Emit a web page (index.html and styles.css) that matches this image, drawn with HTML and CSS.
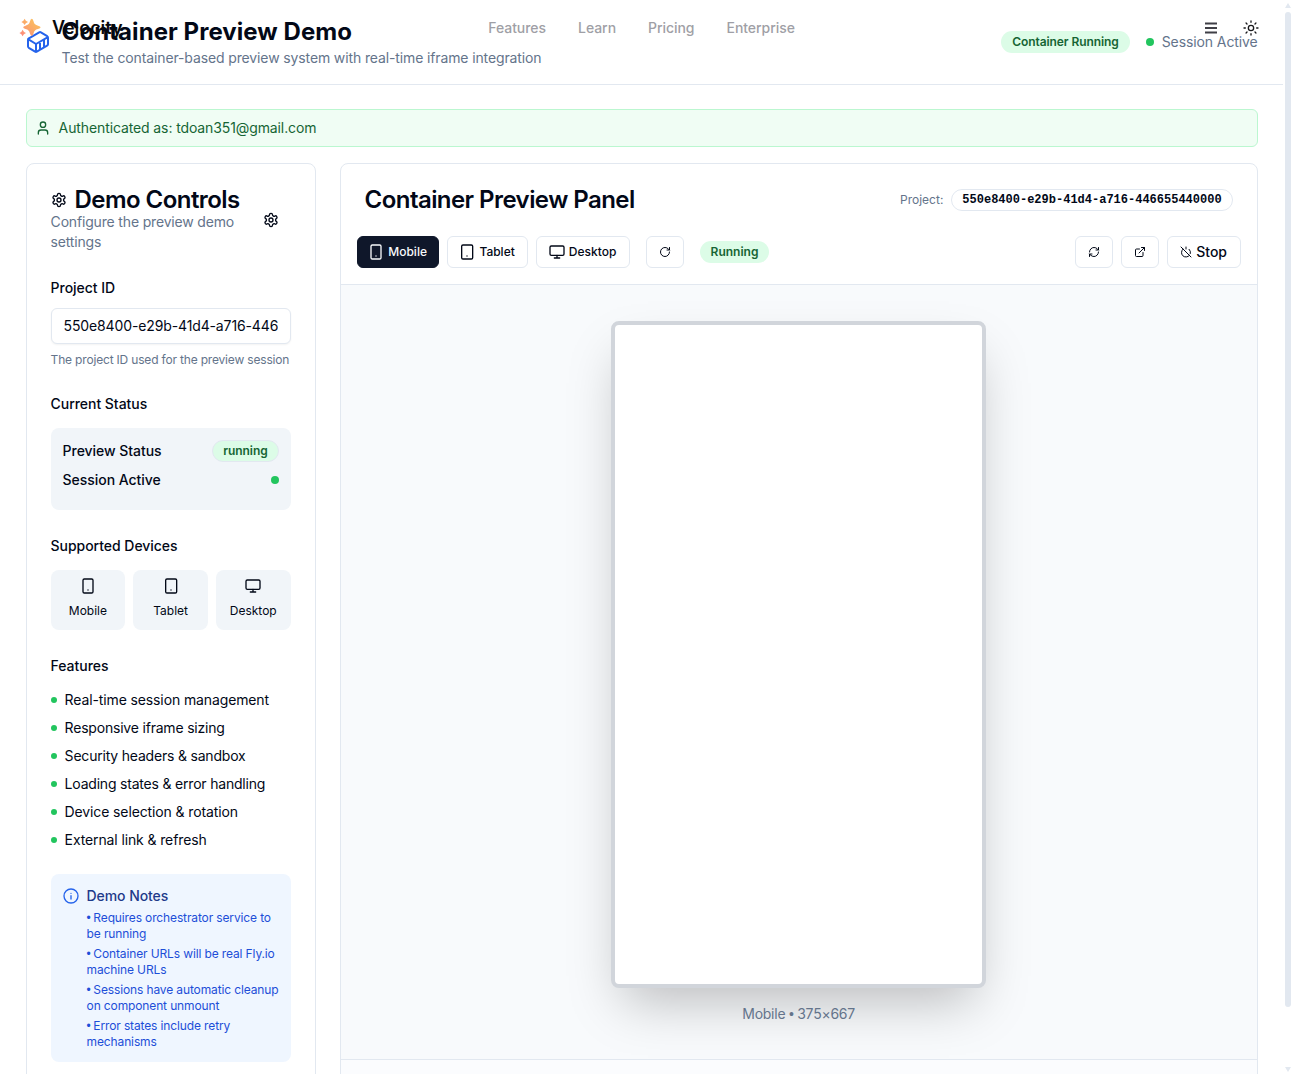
FILE: index.html
```html
<!DOCTYPE html>
<html lang="en">
<head>
<meta charset="utf-8">
<title>Container Preview Demo</title>
<link rel="stylesheet" href="styles.css">
</head>
<body>
<svg class="sprite" aria-hidden="true">
  <symbol id="gear" viewBox="0 0 24 24"><path d="M12.22 2h-.44a2 2 0 0 0-2 2v.18a2 2 0 0 1-1 1.73l-.43.25a2 2 0 0 1-2 0l-.15-.08a2 2 0 0 0-2.73.73l-.22.38a2 2 0 0 0 .73 2.73l.15.1a2 2 0 0 1 1 1.72v.51a2 2 0 0 1-1 1.74l-.15.09a2 2 0 0 0-.73 2.73l.22.38a2 2 0 0 0 2.73.73l.15-.08a2 2 0 0 1 2 0l.43.25a2 2 0 0 1 1 1.73V20a2 2 0 0 0 2 2h.44a2 2 0 0 0 2-2v-.18a2 2 0 0 1 1-1.73l.43-.25a2 2 0 0 1 2 0l.15.08a2 2 0 0 0 2.73-.73l.22-.39a2 2 0 0 0-.73-2.73l-.15-.08a2 2 0 0 1-1-1.74v-.5a2 2 0 0 1 1-1.74l.15-.09a2 2 0 0 0 .73-2.73l-.22-.38a2 2 0 0 0-2.73-.73l-.15.08a2 2 0 0 1-2 0l-.43-.25a2 2 0 0 1-1-1.73V4a2 2 0 0 0-2-2z"/><circle cx="12" cy="12" r="3"/></symbol>
  <symbol id="phone" viewBox="0 0 24 24"><rect x="4.5" y="1.5" width="15" height="21" rx="2"/><path d="M12 18h.01"/></symbol>
  <symbol id="tablet" viewBox="0 0 24 24"><rect x="4" y="1.5" width="16.5" height="21" rx="2"/><path d="M12 18h.01"/></symbol>
  <symbol id="monitor" viewBox="0 0 24 24"><rect x="1.5" y="3" width="21" height="14" rx="2"/><path d="M8 21h8M12 17v4"/></symbol>
  <symbol id="user" viewBox="0 0 24 24"><path d="M19 21v-2a4 4 0 0 0-4-4H9a4 4 0 0 0-4 4v2"/><circle cx="12" cy="7" r="4"/></symbol>
  <symbol id="rotate" viewBox="0 0 24 24"><path d="M21 12a9 9 0 1 1-9-9c2.52 0 4.93 1 6.74 2.74L21 8M21 3v5h-5"/></symbol>
  <symbol id="refresh" viewBox="0 0 24 24"><path d="M3 12a9 9 0 0 1 9-9 9.75 9.75 0 0 1 6.74 2.74L21 8M21 3v5h-5M21 12a9 9 0 0 1-9 9 9.75 9.75 0 0 1-6.74-2.74L3 16M8 16H3v5"/></symbol>
  <symbol id="external" viewBox="0 0 24 24"><path d="M15 3h6v6M10 14 21 3M18 13v6a2 2 0 0 1-2 2H5a2 2 0 0 1-2-2V8a2 2 0 0 1 2-2h6"/></symbol>
  <symbol id="power" viewBox="0 0 24 24"><path d="M18.36 6.64A9 9 0 0 1 20.77 15M6.16 6.16a9 9 0 1 0 12.68 12.68M12 2v4M2 2l20 20"/></symbol>
  <symbol id="container" viewBox="0 0 24 24"><path d="M22 7.7c0-.6-.4-1.2-.8-1.5l-6.3-3.9a1.72 1.72 0 0 0-1.7 0l-10.3 6c-.5.2-.9.8-.9 1.4v6.6c0 .5.4 1.2.8 1.5l6.3 3.9a1.72 1.72 0 0 0 1.7 0l10.3-6c.5-.3.9-1 .9-1.5ZM10 21.9V14L2.1 9.1M10 14l11.9-6.9M14 19.8v-8.1M18 17.5V9.4"/></symbol>
  <symbol id="info" viewBox="0 0 24 24"><circle cx="12" cy="12" r="10.5"/><path d="M12 16.5v-5M12 8h.01"/></symbol>
  <symbol id="menu" viewBox="0 0 24 24"><path d="M3 5.250h18M3 12h18M3 18.750h18"/></symbol>
  <symbol id="sun" viewBox="0 0 24 24"><circle cx="12" cy="12" r="4"/><path d="M12 1.5v2M12 20.5v2M4.6 4.6 6 6M18 18l1.4 1.4M1.5 12h2M20.5 12h2M6 18l-1.4 1.4M19.4 4.6 18 6"/></symbol>
</svg>

<nav class="nav">
  <a class="brand">
    <svg class="spark" viewBox="0 0 22 22"><defs><linearGradient id="warm" x1="0" y1="1" x2="1" y2="0"><stop offset="0" stop-color="#fb8580"/><stop offset=".5" stop-color="#fbaa68"/><stop offset="1" stop-color="#fbc95a"/></linearGradient></defs><path fill="url(#warm)" d="M11.800 1.800 Q13 1.800 13.600 4.600 C14.400 7.300 15.200 7.800 18 8.700 Q20.600 9.400 20.600 10.300 Q20.600 11.300 18 12 C15.200 12.800 14.400 13.500 13.600 16.300 Q13 19 11.800 19 Q10.600 19 9.900 16.300 C9.100 13.500 8.300 12.800 5.500 12 Q3.200 11.300 3.200 10.300 Q3.200 9.400 5.500 8.700 C8.300 7.800 9.100 7.300 9.900 4.600 Q10.600 1.800 11.800 1.800ZM4.600 1.700 Q5.400 4.100 8 4.900 Q5.400 5.700 4.600 8.100 Q3.800 5.700 1.400 4.900 Q3.800 4.100 4.600 1.700ZM2.600 12.700 Q3.500 15.200 6 16 Q3.500 16.800 2.600 19.300 Q1.800 16.800 -.6 16 Q1.800 15.200 2.600 12.700Z"/></svg>
    <span>Velocity</span>
  </a>
  <div class="nav-links"><a>Features</a><a>Learn</a><a>Pricing</a><a>Enterprise</a></div>
  <div class="nav-tools">
    <svg class="icon menu"><use href="#menu"/></svg>
    <svg class="icon"><use href="#sun"/></svg>
  </div>
</nav>

<header class="header">
  <svg class="icon logo"><use href="#container"/></svg>
  <div class="heading">
    <h1>Container Preview Demo</h1>
    <p>Test the container-based preview system with real-time iframe integration</p>
  </div>
  <span class="badge green header-badge">Container Running</span>
  <span class="dot"></span>
  <span class="session">Session Active</span>
</header>

<main class="main">
  <div class="auth"><svg class="icon"><use href="#user"/></svg><span>Authenticated as: tdoan351@gmail.com</span></div>
  <div class="columns">
    <section class="card controls">
      <div class="controls-head">
        <div>
          <h2><svg class="icon"><use href="#gear"/></svg><span>Demo Controls</span></h2>
          <p>Configure the preview demo settings</p>
        </div>
        <button class="ghost"><svg class="icon"><use href="#gear"/></svg></button>
      </div>

      <div class="field">
        <label class="label" for="project">Project ID</label>
        <input id="project" class="input" value="550e8400-e29b-41d4-a716-446655440000">
        <p class="hint">The project ID used for the preview session</p>
      </div>

      <h3 class="label">Current Status</h3>
      <div class="status">
        <div class="status-row"><span>Preview Status</span><span class="badge green outlined">running</span></div>
        <div class="status-row"><span>Session Active</span><span class="dot"></span></div>
      </div>

      <h3 class="label">Supported Devices</h3>
      <div class="devices">
        <div><svg class="icon"><use href="#phone"/></svg><span>Mobile</span></div>
        <div><svg class="icon"><use href="#tablet"/></svg><span>Tablet</span></div>
        <div><svg class="icon"><use href="#monitor"/></svg><span>Desktop</span></div>
      </div>

      <h3 class="label">Features</h3>
      <ul class="features">
        <li>Real-time session management</li>
        <li class="tight">Responsive iframe sizing</li>
        <li class="tight">Security headers &amp; sandbox</li>
        <li class="tight">Loading states &amp; error handling</li>
        <li>Device selection &amp; rotation</li>
        <li>External link &amp; refresh</li>
      </ul>

      <div class="notes">
        <svg class="icon"><use href="#info"/></svg>
        <div>
          <h4>Demo Notes</h4>
          <ul>
            <li><span class="bullet">• </span>Requires orchestrator service to<br>be running</li>
            <li><span class="bullet">• </span>Container URLs will be real Fly.io<br>machine URLs</li>
            <li><span class="bullet">• </span>Sessions have automatic cleanup<br>on component unmount</li>
            <li><span class="bullet">• </span>Error states include retry<br>mechanisms</li>
          </ul>
        </div>
      </div>
    </section>

    <section class="card preview">
      <div class="preview-head">
        <h2>Container Preview Panel</h2>
        <span class="project">Project:</span>
        <span class="badge outlined mono">550e8400-e29b-41d4-a716-446655440000</span>
      </div>
      <div class="toolbar">
        <button class="btn active w-mobile"><svg class="icon"><use href="#phone"/></svg>Mobile</button>
        <button class="btn w-tablet"><svg class="icon"><use href="#tablet"/></svg>Tablet</button>
        <button class="btn w-desktop"><svg class="icon"><use href="#monitor"/></svg>Desktop</button>
        <button class="btn square rotate"><svg class="icon small"><use href="#rotate"/></svg></button>
        <span class="badge green run-badge">Running</span>
        <button class="btn square push"><svg class="icon small"><use href="#refresh"/></svg></button>
        <button class="btn square"><svg class="icon small"><use href="#external"/></svg></button>
        <button class="btn stop"><svg class="icon small"><use href="#power"/></svg>Stop</button>
      </div>
      <div class="stage">
        <div class="device"></div>
        <p>Mobile <span class="bullet">•</span> 375×667</p>
      </div>
      <div class="preview-foot"></div>
    </section>
  </div>
</main>

<div class="scrollbar"><i class="up"></i><i class="thumb"></i><i class="down"></i></div>
</body>
</html>
```
FILE: styles.css
```css
* { box-sizing: border-box; margin: 0; padding: 0; }
html, body { height: 1074px; overflow: hidden; }
body {
  background: #fff;
  color: #020817;
  font-family: Inter, "Liberation Sans", sans-serif;
  font-size: 14px;
  line-height: 20px;
  padding-right: 10px;
}
ul { list-style: none; }
button, input { font: inherit; color: inherit; }
.sprite { position: absolute; width: 0; height: 0; }
.icon {
  width: 16px; height: 16px; flex: none; display: block;
  fill: none; stroke: currentColor; stroke-width: 2;
  stroke-linecap: round; stroke-linejoin: round;
}
.icon.small { width: 12px; height: 12px; }

/* Site navigation floats over the page header */
.nav {
  position: absolute; top: 0; left: 0; right: 9px; height: 56px;
  display: flex; align-items: center; justify-content: space-between;
  padding: 0 25px 0 20px; z-index: 2;
}
.brand { display: flex; align-items: center; gap: 10px; font-size: 18px; font-weight: 600; letter-spacing: -0.05px; width: 280px; color: #09090b; }
.spark { width: 22px; height: 22px; overflow: visible; }
.nav-links { display: flex; gap: 32px; font-weight: 500; letter-spacing: -0.05px; color: #9f9fa6; width: 302.5px; white-space: nowrap; }
.nav-tools { display: flex; gap: 24px; width: 280px; justify-content: flex-end; color: #18181b; }
.nav-tools .menu { color: #3f3f46; stroke-width: 2.8; stroke-linecap: butt; }

.header { height: 85px; border-bottom: 1px solid #e2e8f0; display: flex; align-items: center; padding: 0 25.4px 0 25.6px; }
.logo { width: 24px; height: 24px; color: #2563eb; margin-right: 12px; }
.heading { flex: 1; }
h1 { font-size: 24px; line-height: 32px; font-weight: 700; letter-spacing: 0.05px; }
.heading p { color: #64748b; letter-spacing: -0.125px; }
.session { color: #64748b; margin-left: 8px; letter-spacing: -0.1px; }
.dot { width: 8px; height: 8px; border-radius: 50%; background: #22c55e; }

.badge { height: 22px; border-radius: 11px; border: 1px solid transparent; padding: 0 10px; font-size: 12px; line-height: 20px; font-weight: 600; white-space: nowrap; }
.green { background: #dcfce7; color: #166534; letter-spacing: -0.08px; }
.outlined { border-color: #e2e8f0; }
.header-badge { margin-right: 16px; }
.mono { font-family: "Liberation Mono", monospace; }

.main { padding: 24px 25.4px 0 25.6px; }
.auth { height: 38px; display: flex; align-items: center; gap: 8px; padding: 0 8px; border: 1px solid #bbf7d0; border-radius: 6px; background: #f0fdf4; color: #166534; margin-bottom: 16px; letter-spacing: -0.11px; }
.columns { display: grid; grid-template-columns: 290px 1fr; gap: 24px; height: 960px; }
.card { border: 1px solid #e2e8f0; border-radius: 8px; }

.controls { padding: 24px; }
.controls-head { display: flex; align-items: center; justify-content: space-between; color: #64748b; margin-bottom: 26px; }
.controls-head > div { width: 196px; }
.controls-head p { letter-spacing: -0.17px; }
h2 { font-size: 24px; line-height: 24px; font-weight: 600; letter-spacing: -0.56px; color: #020817; display: flex; align-items: center; gap: 8px; white-space: nowrap; }
.ghost { width: 40px; height: 32px; display: grid; place-items: center; background: none; border: 0; color: #020817; }
.label { display: block; font-size: 14px; line-height: 20px; font-weight: 500; letter-spacing: -0.04px; margin-bottom: 14px; }
.field .label { margin-bottom: 10px; }
.input { width: 240px; height: 36px; border: 1px solid #e2e8f0; border-radius: 6px; padding: 0 12px 1px; background: #fff; box-shadow: 0 1px 2px rgba(0,0,0,.05); display: block; letter-spacing: -0.13px; }
.hint { font-size: 12px; line-height: 16px; margin: 8px 0 26px; color: #64748b; white-space: nowrap; letter-spacing: -0.18px; }
.status { height: 82px; padding: 12px; border-radius: 8px; background: #f1f5f9; display: flex; flex-direction: column; gap: 8px; margin-bottom: 26px; font-weight: 500; }
.status-row { display: flex; align-items: center; justify-content: space-between; letter-spacing: -0.04px; }
.devices { display: grid; grid-template-columns: repeat(3, 1fr); gap: 8px; margin-bottom: 26px; }
.devices div { height: 60px; border-radius: 8px; background: #f1f5f9; padding-top: 8px; display: flex; flex-direction: column; align-items: center; gap: 9px; font-size: 12px; line-height: 16px; }
.features { display: grid; gap: 8px; margin-bottom: 24px; }
.features li { display: flex; align-items: center; gap: 8px; white-space: nowrap; letter-spacing: -0.12px; }
.features .tight { letter-spacing: -0.2px; }
.features li::before { content: ""; width: 6px; height: 6px; border-radius: 50%; background: #22c55e; }
.notes { height: 188px; border-radius: 8px; background: #eff6ff; padding: 12px; display: flex; gap: 8px; color: #1d4ed8; white-space: nowrap; }
.notes .icon { margin-top: 2px; color: #2563eb; }
.notes h4 { font-size: 14px; font-weight: 500; letter-spacing: -0.08px; color: #1e3a8a; margin-bottom: 4px; }
.notes ul { display: grid; gap: 4px; font-size: 12px; line-height: 16px; letter-spacing: -0.13px; }
.bullet { font-family: "Liberation Sans", sans-serif; line-height: 1; letter-spacing: -0.4px; }

.preview { overflow: hidden; display: flex; flex-direction: column; }
.preview-head { height: 72px; display: flex; align-items: center; padding: 0 24px; }
.preview-head h2 { flex: 1; }
.project { font-size: 12px; color: #64748b; margin-right: 8px; }
.toolbar { height: 49px; display: flex; align-items: flex-start; gap: 8px; padding: 0 16px; border-bottom: 1px solid #e2e8f0; }
.btn { height: 32px; display: flex; align-items: center; justify-content: center; gap: 4px; border: 1px solid #e2e8f0; border-radius: 6px; background: #fff; font-size: 12px; font-weight: 500; white-space: nowrap; }
.active { background: #0f172a; border-color: #0f172a; color: #f8fafc; }
.w-mobile { width: 82px; }
.w-tablet { width: 81px; }
.w-desktop { width: 94px; }
.square { width: 38px; }
.rotate { margin: 0 8px; }
.push { margin-left: auto; }
.stop { width: 74px; font-size: 14px; }
.run-badge { margin-top: 5px; letter-spacing: 0; }
.stage { height: 774px; background: #f8fafc; display: flex; flex-direction: column; align-items: center; padding-top: 36px; color: #64748b; }
.device { width: 375px; height: 667px; flex: none; border: 4px solid #d1d5db; border-radius: 8px; background: #fff; box-shadow: 0 25px 50px -12px rgba(0,0,0,.25); }
.stage p { margin-top: 16px; letter-spacing: -0.25px; }
.preview-foot { flex: 1; border-top: 1px solid #e2e8f0; background: #fbfcfe; }

.scrollbar { position: fixed; top: 0; right: 2px; width: 6px; height: 1074px; display: flex; flex-direction: column; }
.scrollbar .up { border: 3px solid transparent; border-top: 0; border-bottom: 5px solid #e2e8f0; margin: 3px 0 4px; }
.scrollbar .thumb { height: 995px; border-radius: 3px; background: #e2e8f0; }
.scrollbar .down { border: 3px solid transparent; border-bottom: 0; border-top: 5px solid #e2e8f0; margin-top: 60px; }
```
